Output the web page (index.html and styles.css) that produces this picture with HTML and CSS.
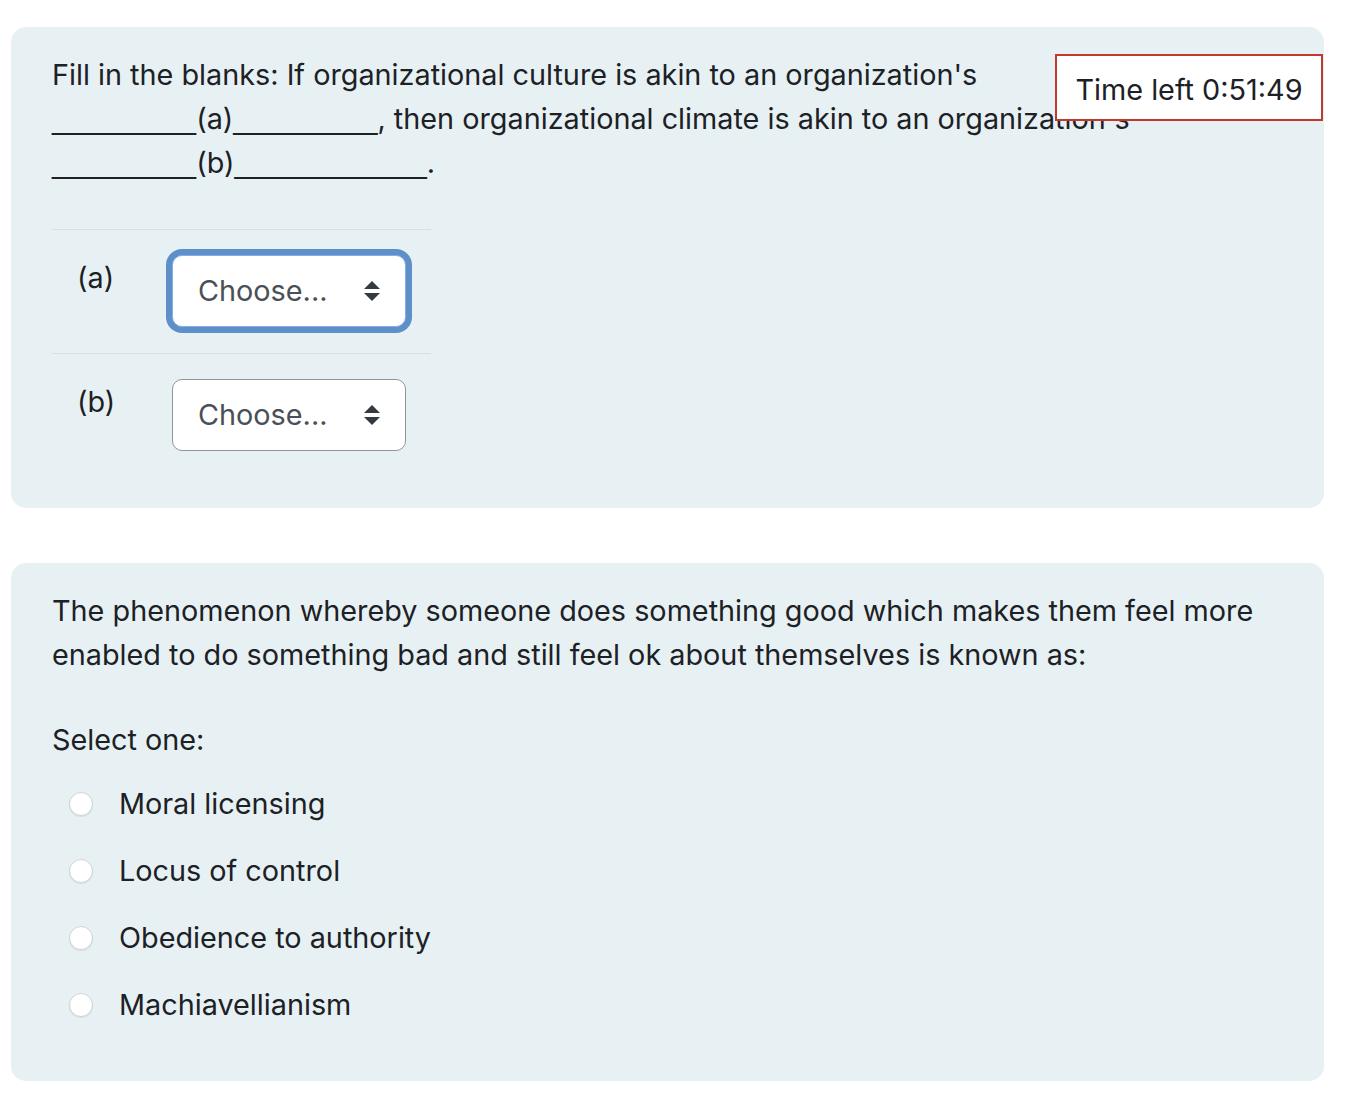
FILE: index.html
```html
<!DOCTYPE html>
<html>
<head>
<meta charset="utf-8">
<link rel="stylesheet" href="styles.css">
</head>
<body>
<div class="page">
  <div class="card">
    <p class="qtext">Fill in the blanks: If organizational culture is akin to an organization's <span class="blank"><span class="u">_________</span>(a)<span class="u">_________</span>,</span> then organizational climate is akin to an organization's <span class="blank"><span class="u">_________</span>(b)<span class="u">____________</span>.</span></p>
    <table class="answers">
      <tr>
        <td class="lbl">(a)</td>
        <td class="ctl"><div class="select focus"><span>Choose...</span><svg class="arrows" width="18" height="22" viewBox="0 0 18 22"><path d="M9 1 L17 9 L1 9 Z" fill="#343a40"/><path d="M1 13 L17 13 L9 21 Z" fill="#343a40"/></svg></div></td>
      </tr>
      <tr>
        <td class="lbl">(b)</td>
        <td class="ctl"><div class="select"><span>Choose...</span><svg class="arrows" width="18" height="22" viewBox="0 0 18 22"><path d="M9 1 L17 9 L1 9 Z" fill="#343a40"/><path d="M1 13 L17 13 L9 21 Z" fill="#343a40"/></svg></div></td>
      </tr>
    </table>
  </div>
  <div class="card card2">
    <p class="qtext">The phenomenon whereby someone does something good which makes them feel more enabled to do something bad and still feel ok about themselves is known as:</p>
    <p class="prompt">Select one:</p>
    <div class="options">
      <div class="opt"><span class="radio"></span><span>Moral licensing</span></div>
      <div class="opt"><span class="radio"></span><span>Locus of control</span></div>
      <div class="opt"><span class="radio"></span><span>Obedience to authority</span></div>
      <div class="opt"><span class="radio"></span><span>Machiavellianism</span></div>
    </div>
  </div>
</div>
<div class="timer">Time left 0:51:49</div>
</body>
</html>
```

FILE: styles.css
```css
html, body {
  margin: 0;
  padding: 0;
  background: #ffffff;
}
body {
  font-family: Inter, "Noto Sans", sans-serif;
  font-size: 28.8px;
  line-height: 44px;
  color: #1d2125;
}
.page {
  padding: 27px 48px 0 11px;
  display: flex;
  flex-direction: column;
  gap: 55px;
}
.card {
  background: #e7f1f4;
  border-radius: 15px;
  padding: 26px 41px 31px 41px;
}
.qtext {
  margin: 0;
}
.blank {
  white-space: nowrap;
}
.u {
  font-family: "Liberation Sans", Arial, sans-serif;
}
.answers {
  border-collapse: collapse;
  margin-top: 44px;
  width: 379px;
}
.answers tr {
  border-top: 1px solid #d8e0e4;
}
.answers td {
  padding: 25px 25px 26px 25px;
  vertical-align: top;
}
.lbl {
  padding-top: 26px !important;
  width: 70px;
}
.select {
  width: 232px;
  height: 70px;
  box-sizing: content-box;
  background: #ffffff;
  border: 1px solid #8f959e;
  border-radius: 10px;
  display: flex;
  align-items: center;
  justify-content: space-between;
  padding: 0;
  color: #495057;
}
.select span {
  padding-left: 25px;
}
.select .arrows {
  margin-right: 24px;
}
.select.focus {
  border-color: #7fb0ea;
  box-shadow: 0 0 0 6px #5e8fc8;
}
.card2 {
  padding-bottom: 54px;
}
.prompt {
  margin: 41px 0 0 0;
}
.options {
  margin-top: 20px;
  display: flex;
  flex-direction: column;
  gap: 23px;
}
.opt {
  display: flex;
  align-items: center;
  padding-left: 17px;
}
.radio {
  width: 22px;
  height: 22px;
  border-radius: 50%;
  background: #ffffff;
  border: 1px solid #cfd3d6;
  box-shadow: 0 1px 1px rgba(0,0,0,0.08);
  margin-right: 26px;
  flex: none;
}
.timer {
  position: fixed;
  top: 54px;
  left: 1055px;
  width: 264px;
  height: 59px;
  border: 2px solid #c0392b;
  background: #ffffff;
  display: flex;
  align-items: center;
  justify-content: center;
  padding-top: 4px;
  box-sizing: content-box;
  color: #1d2125;
}
```
